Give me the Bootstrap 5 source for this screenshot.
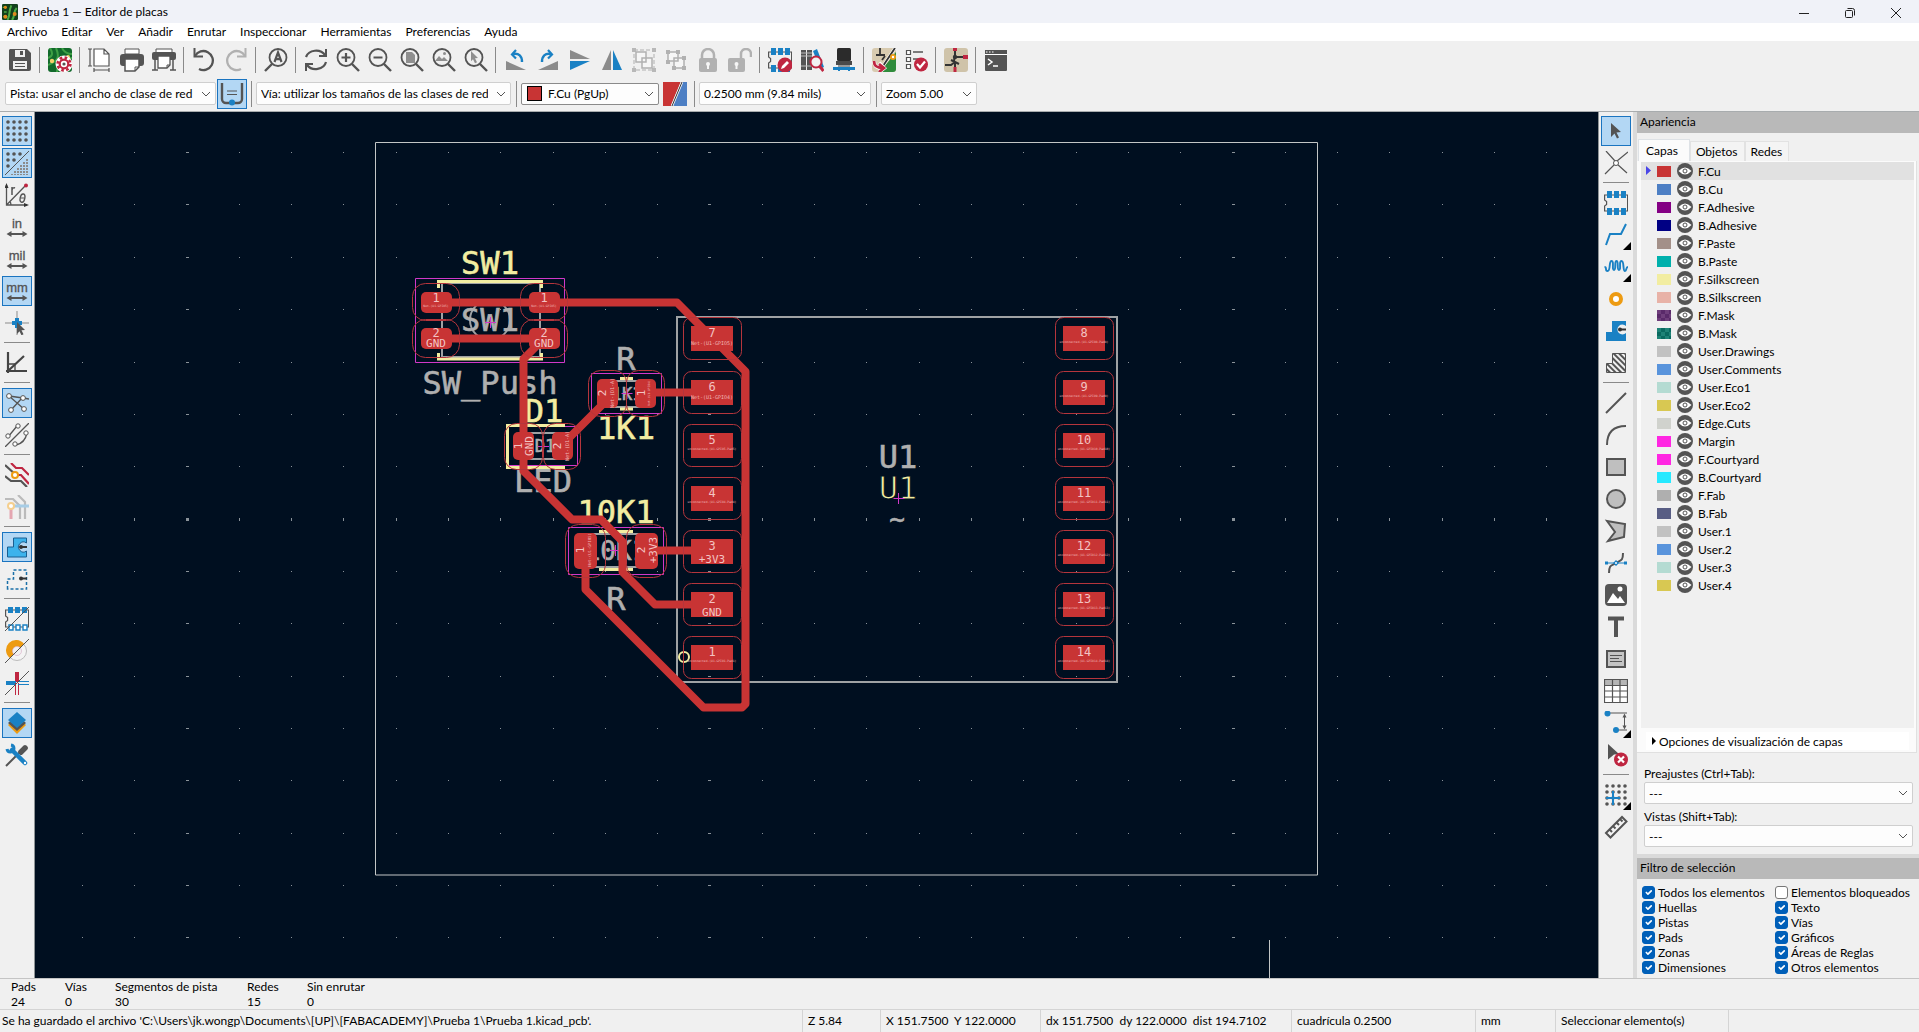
<!DOCTYPE html>
<html lang="es">
<head>
<meta charset="utf-8">
<meta name="viewport" content="width=device-width, initial-scale=1">
<title>Prueba 1 — Editor de placas</title>
<link href="https://cdn.jsdelivr.net/npm/bootstrap@5.3.0/dist/css/bootstrap.min.css" rel="stylesheet">
<style>
:root{--ui:#f0f0f0;--ink:#545454;--sel:#b3d7f4;--selb:#1a74c0;--cu:#c83434}
body{font-family:Lato,"Open Sans",sans-serif;font-size:12px;line-height:15px;color:#000;background:var(--ui);overflow:hidden}
.sprites{width:0;height:0}
.titlebar{height:23px;background:#f0f2f8}
.titlebar .winbtn{width:46px;height:20px;border:0;background:none;padding:0}
.menubar{height:18px;background:#fff}
.menubar a{color:#000;text-decoration:none;padding:0 7px;line-height:18px}
.toolrow{height:38px;padding-left:4px}
.optrow{height:32px;padding:0 5px 3px}
.tool{width:32px;height:32px;padding:3px;border:1px solid transparent;border-radius:0;line-height:0;position:relative}
.tool svg{width:24px;height:24px}
.tool.is-on::before{content:"";position:absolute;inset:0;border:1px solid var(--selb);background:var(--sel)}
.tool.is-on svg{position:relative}
.tool:disabled{border-color:transparent;opacity:.4}
.tool.more::after{content:"";position:absolute;right:0;bottom:0;border:4px solid transparent;border-right-color:#000;border-bottom-color:#000}
.vline{width:8px;height:26px;padding-left:3px;flex:none}
.optrow .form-select + .vline{margin-left:2px}
.vline::before{content:"";display:block;width:1px;height:100%;background:#8a8a8a}
.hline{height:8px;width:26px;padding-top:3px;flex:none}
.hline::before{content:"";display:block;height:1px;background:#8a8a8a}
.pick{font-size:12px;line-height:15px;min-height:0;height:23px;padding:0 22px 0 4px;border:1px solid #cfcfcf;border-radius:2px;background-color:#fdfdfd;color:#000;background-size:10px;background-position:right 4px center;background-image:url("data:image/svg+xml,%3Csvg xmlns='http://www.w3.org/2000/svg' viewBox='0 0 10 10'%3E%3Cpath d='M1 3l4 4 4-4' fill='none' stroke='%23555'/%3E%3C/svg%3E")}
.w-track{width:211px}.w-via{width:255px}.w-grid{width:172px}.w-zoom{width:96px}
.layerpick{width:138px;height:22px;border:1px solid #8a8a8a;border-radius:2px;background:#fdfdfd;padding-left:5px}
.layerpick .pick{border:0;height:20px;background-color:transparent;padding-left:6px}
.chip{width:15px;height:15px;background:var(--cu);border:1px solid #000;flex:none}
.workarea{border-top:1px solid #a8acae;border-bottom:1px solid #c4c4c4}
.sidebar{width:34px;padding-top:3px;flex:none}
.board{background:#000f20;border-left:1px solid #8e9496;border-right:1px solid #8e9496;min-width:0}
.board svg{width:100%;height:100%;display:block}
.board text{font-family:"DejaVu Sans Mono",monospace;text-anchor:middle}
.big{font-size:32px}.mid{font-size:26px}.sml{font-size:17px}
.heavy{stroke-width:.6px}
.pn{font-size:12px;fill:#f3c3c3}.pl{font-size:11px;fill:#f3c3c3}.n5{font-size:5px;fill:#f0b6b6}.n4{font-size:4px;fill:#f0b6b6}.n3{font-size:3px;fill:#f0b6b6}
.panelcol{width:286px;border-left:4px solid #dadada;flex:none}
.caphead{height:21px;background:#b9b9b9;padding-left:3px;line-height:19px}
.caphead.split{height:25px;border-top:4px solid #dadada}
.tabsrow{height:28px;padding-left:1px;border:0}
.tabsrow .nav-link{border:1px solid #e2e2e2;border-bottom:0;border-radius:0;background:#f4f4f4;color:#000;padding:0 6px 0 5px;height:20px;line-height:19px;margin:0}
.tabsrow .nav-link.active{background:#fbfbfb;height:22px;padding:0 11px 0 7px;line-height:20px;color:#000}
.tabpage{background:#fbfbfb;border-right:1px solid #e0e0e0;border-bottom:1px solid #e0e0e0;padding:1px 2px 2px 4px;margin-right:2px}
.layers{background:var(--ui);min-height:0}
.lrow{height:18px;padding-left:5px}
.lrow.current{background:#e1e1e1}
.lrow .arrow{width:11px;height:10px}
.lrow .arrow svg{display:block;width:5px;height:9px}
.sw{width:14px;height:11px;margin-right:6px;flex:none}
.eye{width:16px;height:16px;padding:0;border:0;background:none;margin-right:5px;line-height:0}
.eye svg{width:16px;height:16px}
.fold{background:#fff;height:18px;margin:4px 5px 0;border:0;padding:0 0 0 6px;line-height:15px}
.fold svg{width:4px;height:8px;margin-right:3px}
.field{padding:5px 6px 0 7px}
.field.first{padding-top:13px}
.field.last{padding-bottom:7px}
.field label{display:block;line-height:15px;padding-bottom:1px}
.field .pick{height:22px}
.filters{height:99px;padding:6px 5px}
.filters .col-a{width:133px}
.cbx{height:15px;min-height:0;margin:0;padding:0;display:flex;align-items:center;white-space:nowrap}
.cbx .form-check-input{width:13px;height:13px;margin:0 3px 0 0;float:none;border:1px solid #777;border-radius:3px;flex:none}
.cbx .form-check-input:checked{background-color:#005fb8;border-color:#005fb8}
.info{height:30px;padding-left:11px}
.i1{width:54px}.i2{width:50px}.i3{width:132px}.i4{width:60px}
.statusbar{height:23px;border-top:1px solid #d4d4d4}
.statusbar div{padding-left:5px;line-height:22px;border-left:1px solid #d4d4d4;white-space:nowrap;height:22px}
.statusbar div:first-child{padding-left:2px;border:0}
.s1{width:78px}.s2{width:160px}.s3{width:251px}.s4{width:184px}.s5{width:80px}.s6{width:173px}.s7{width:191px}
</style>
</head>
<body class="vh-100 d-flex flex-column">

<svg class="sprites position-absolute" aria-hidden="true">
<defs>
<pattern id="hatch" width="4" height="4" patternUnits="userSpaceOnUse" patternTransform="rotate(-45)"><rect width="2" height="4" fill="#545454"/></pattern>
</defs>
<symbol id="save" viewBox="0 0 24 24"><path fill="#545454" d="M2 1h17l4 4v16a2 2 0 0 1-2 2H3a2 2 0 0 1-2-2V2z"/><path fill="#f0f0f0" d="M7 2h10v7H7zM5 13h14v8H5z"/><path fill="#545454" d="M12 3h3v4h-3zM7 15h10v1H7zM7 18h10v1H7z"/></symbol>
<symbol id="pcb" viewBox="0 0 24 24"><rect width="24" height="24" rx="3" fill="#12692b"/><path d="M2 0c3 5 3 8-2 10M8 0c4 9 2 13-8 17M14 0c2 4 5 6 10 6M9 24c0-8 3-14 15-14" fill="none" stroke="#3ea045" stroke-width="2"/><circle cx="4" cy="13" r="2.200" fill="#f6d06a"/><circle cx="20" cy="9" r="2" fill="#f6d06a"/></symbol>
<symbol id="boardsetup" viewBox="0 0 24 24"><use href="#pcb"/><circle cx="16" cy="16" r="6" fill="none" stroke="#fff" stroke-width="5"/><circle cx="16" cy="16" r="6.400" fill="none" stroke="#bf2641" stroke-width="2.600" stroke-dasharray="2.600 2.400"/><circle cx="16" cy="16" r="4.300" fill="#fff" stroke="#bf2641" stroke-width="2.200"/><circle cx="16" cy="16" r="1.600" fill="#545454"/></symbol>
<symbol id="page" viewBox="0 0 24 24"><path d="M6 1h10l5 5v12H6z" fill="#fff"/><path d="M6 1h10l5 5v12H6zM16 1v5h5M2 1v17M0 1h4M0 18h4M6 22h15M6 20v4M21 20v4" fill="none" stroke="#545454" stroke-width="1.200"/></symbol>
<symbol id="print" viewBox="0 0 24 24"><path d="M5 1h14v5H5z" fill="#fff" stroke="#545454"/><rect y="6" width="24" height="12" rx="3" fill="#545454"/><path d="M5 11h14v8l-4 4H5z" fill="#fff" stroke="#545454" stroke-width="1.500"/><path d="M19 19h-4v4" fill="none" stroke="#545454"/></symbol>
<symbol id="plot" viewBox="0 0 24 24"><path d="M4 1h16v4H4z" fill="#fff" stroke="#545454"/><rect y="4" width="24" height="8" rx="2" fill="#545454"/><path d="M6 8h12v9l-3 3H6z" fill="#fff" stroke="#545454" stroke-width="1.300"/><path d="M3 11v11M21 11v11M0 22h6M18 22h6" stroke="#545454" stroke-width="1.500" fill="none"/><path d="M18 17h-3v3" fill="none" stroke="#545454"/></symbol>
<symbol id="undo" viewBox="0 0 24 24"><path d="M3 8a9.500 9.500 0 1 1 4 13" fill="none" stroke="#545454" stroke-width="2.300"/><path d="M2.500 0v8.500h8.500" fill="none" stroke="#545454" stroke-width="2"/></symbol>
<symbol id="redo" viewBox="0 0 24 24"><use href="#undo" transform="matrix(-1 0 0 1 24 0)"/></symbol>
<symbol id="lens" viewBox="0 0 24 24"><circle cx="10" cy="9.500" r="8.500" fill="none" stroke="#545454" stroke-width="1.800"/><path d="M16 16l7 7" stroke="#545454" stroke-width="2.400"/></symbol>
<symbol id="find" viewBox="0 0 24 24"><use href="#lens" transform="matrix(-1 0 0 1 24 0)"/><path d="M10.500 14l3.500-9.500 3.500 9.500M11.500 11.200h5" fill="none" stroke="#545454" stroke-width="2.200"/></symbol>
<symbol id="refresh" viewBox="0 0 24 24"><path d="M2 9A10.500 9 0 0 1 21 7M22 14A10.500 9 0 0 1 3 17" fill="none" stroke="#545454" stroke-width="2.200"/><path d="M22 1v7h-7M2 23v-7h7" fill="none" stroke="#545454" stroke-width="2"/></symbol>
<symbol id="zin" viewBox="0 0 24 24"><use href="#lens"/><path d="M10 5v9M5.500 9.500h9" stroke="#545454" stroke-width="2.200"/></symbol>
<symbol id="zout" viewBox="0 0 24 24"><use href="#lens"/><path d="M5.500 9.500h9" stroke="#545454" stroke-width="2"/></symbol>
<symbol id="zfit" viewBox="0 0 24 24"><use href="#lens"/><path d="M6 4h6l3 3v8H6z" fill="#8f8f8f"/></symbol>
<symbol id="zobj" viewBox="0 0 24 24"><use href="#lens"/><path d="M3 13l4-5 3 3 2-2 4 4z" fill="#8f8f8f"/><circle cx="12.500" cy="5.500" r="1.500" fill="#8f8f8f"/></symbol>
<symbol id="zsel" viewBox="0 0 24 24"><use href="#lens"/><path d="M7 3l7 7-3 .3 2 4-2 1-2-4-2 2z" fill="#8f8f8f"/></symbol>
<symbol id="rotl" viewBox="0 0 24 24"><path d="M2 13v9h20z" fill="#8b8b8b"/><path d="M9 6c6-1 9 2 9 8" fill="none" stroke="#1a81c4" stroke-width="2.400"/><path d="M12 2L8 6.500l4 4" fill="none" stroke="#1a81c4" stroke-width="2.200"/></symbol>
<symbol id="rotr" viewBox="0 0 24 24"><use href="#rotl" transform="matrix(-1 0 0 1 24 0)"/></symbol>
<symbol id="flipv" viewBox="0 0 24 24"><path d="M2 2v9h20z" fill="#8b8b8b"/><path d="M2 22v-9h20z" fill="#1a81c4"/></symbol>
<symbol id="fliph" viewBox="0 0 24 24"><path d="M2 22h9V2z" fill="#8b8b8b"/><path d="M22 22h-9V2z" fill="#1a81c4"/></symbol>
<symbol id="grp" viewBox="0 0 24 24"><path d="M2 2h20v20H2z" fill="none" stroke="#545454" stroke-dasharray="4 2"/><path d="M0 0h4v4H0zM20 0h4v4h-4zM0 20h4v4H0zM20 20h4v4h-4z" fill="#666"/><path d="M4 4h10v10H4zM10 10h10v10H10z" fill="#fff" stroke="#545454" stroke-width="1.500"/></symbol>
<symbol id="ungrp" viewBox="0 0 24 24"><path d="M4 4h10v9H4zM10 10h10v10H10z" fill="#fff" stroke="#545454" stroke-width="1.500"/><path d="M2 2h4v4H2zM12 2h4v4h-4zM2 12h4v4H2zM18 8h4v4h-4zM8 18h4v4H8zM18 18h4v4h-4z" fill="#545454"/></symbol>
<symbol id="lock" viewBox="0 0 24 24"><path d="M6 11V7a6 6 0 0 1 12 0v4" fill="none" stroke="#545454" stroke-width="2.500"/><rect x="3" y="10" width="18" height="14" rx="2" fill="#545454"/><circle cx="12" cy="16" r="2" fill="#fff"/><path d="M11 16h2v5h-2z" fill="#fff"/></symbol>
<symbol id="unlock" viewBox="0 0 24 24"><path d="M13 11V6a5 5 0 0 1 10 0v3" fill="none" stroke="#545454" stroke-width="2.500"/><rect x="0" y="10" width="17" height="14" rx="2" fill="#545454"/><circle cx="8.500" cy="16" r="2" fill="#fff"/><path d="M7.500 16h2v5h-2z" fill="#fff"/></symbol>
<symbol id="fp" viewBox="0 0 24 24"><path d="M.6 4h23v16H.6v-5l2-1.500v-3L.6 9z" fill="none" stroke="#545454" stroke-width="1.200"/><path d="M3 0h5v7H3zM10 0h5v7h-5zM17 0h5v7h-5zM3 17h5v7H3zM10 17h5v7h-5zM17 17h5v7h-5z" fill="#1a81c4"/></symbol>
<symbol id="fpedit" viewBox="0 0 24 24"><use href="#fp"/><circle cx="17" cy="17" r="7.500" fill="#bf2641"/><path d="M13 21l1-3 5-5 2 2-5 5z" fill="#fff"/></symbol>
<symbol id="lib" viewBox="0 0 24 24"><path d="M1 2h5v20H1zM7 2h5v20H7z" fill="#545454"/><path d="M1 5h11M1 8h11M1 18h11" stroke="#bbb"/><path d="M13 3l4-2 7 18-4 2z" fill="#1a81c4"/><circle cx="16" cy="14" r="5.500" fill="#f2f2f2" stroke="#bf2641" stroke-width="2"/><path d="M19.500 18l4 5" stroke="#bf2641" stroke-width="3"/></symbol>
<symbol id="fpview" viewBox="0 0 24 24"><rect x="5" width="14" height="13" rx="1.500" fill="#2b2b2b"/><path d="M4 13h16v4H4z" fill="#4a4a4a"/><path d="M6 17h12v2H6z" fill="#999"/><path d="M1 19h22v3H1z" fill="#1a81c4"/><path d="M7 19v4M17 19v4" stroke="#1a81c4" stroke-width="2"/></symbol>
<symbol id="upd" viewBox="0 0 24 24"><rect width="24" height="24" rx="3" fill="#d8cbb0"/><path d="M24 4v17a3 3 0 0 1-3 3H8z" fill="#2f8c3c"/><path d="M23 0L7 24" stroke="#fff" stroke-width="3"/><path d="M23 0L7 24M8 0v7M4 7h9M10 12l3-4" stroke="#333" stroke-width="1.800" fill="none"/><circle cx="21" cy="9" r="3" fill="#ed9b12"/><circle cx="21" cy="9" r="1.200" fill="#fff"/><path d="M2 13c0 6 4 7 9 7M7 15l5 5-5 4" stroke="#fff" stroke-width="4" fill="none"/><path d="M2 13c0 6 4 7 9 7M7 16l5 4-5 4" stroke="#bf2641" stroke-width="2.800" fill="none"/></symbol>
<symbol id="drc" viewBox="0 0 24 24"><path d="M2.500 2.500h4v4h-4zM2.500 9.500h4v4h-4zM2.500 16.500h4v4h-4z" fill="#fff" stroke="#545454" stroke-width="1.200"/><path d="M9 4h10M9 11h5" stroke="#545454" stroke-width="1.500"/><circle cx="17" cy="16.500" r="7" fill="#bf2641"/><path d="M13 16l3 3.500 5-6" fill="none" stroke="#fff" stroke-width="2.200"/></symbol>
<symbol id="sch" viewBox="0 0 24 24"><rect width="24" height="24" rx="3" fill="#cfc3a9"/><path d="M11 3v5l-1 5M10 9h9M11 14l-4 3H1M11 14v10M7 12l8 4" stroke="#333" stroke-width="2" fill="none"/><circle cx="11" cy="9" r="2.200" fill="#333"/><path d="M11 0v3M19 9h5" stroke="#bf2641" stroke-width="4"/><path d="M11 19v5" stroke="#bf2641" stroke-width="3"/></symbol>
<symbol id="term" viewBox="0 0 24 24"><path d="M1 2h22v4H1zM1 7h22v15a1 1 0 0 1-1 1H2a1 1 0 0 1-1-1z" fill="#545454"/><path d="M1 6.500h22M2 4h1.500M5 4h1.500M8 4h1.500" stroke="#fff"/><path d="M4 11l4 3-4 3M9 18h5" stroke="#fff" stroke-width="1.500" fill="none"/></symbol>
<symbol id="autow" viewBox="0 0 24 24"><path d="M2 1v16a4 4 0 0 0 4 4h12a4 4 0 0 0 4-4V1" fill="none" stroke="#545454" stroke-width="2.400"/><path d="M7 9h10M7 12.500h10" stroke="#545454" stroke-width="1.200"/><circle cx="12" cy="20.500" r="3" fill="#1a81c4"/></symbol>
<symbol id="pair" viewBox="0 0 24 24"><path d="M0 0h18L8 24H0z" fill="#c83434"/><path d="M18 0h6v24H8z" fill="#4d7fc4"/><path d="M19 0L9 24" stroke="#fff" stroke-width="2.500"/><path d="M19 0L9 24" stroke="#333"/></symbol>
<symbol id="grid" viewBox="0 0 24 24"><path d="M3 3h19M3 9h19M3 15h19M3 21h19" stroke="#545454" stroke-width="3.600" stroke-linecap="round" stroke-dasharray="0 6"/></symbol>
<symbol id="gridov" viewBox="0 0 24 24"><path d="M3 3h13M3 9h7M3 15h1" stroke="#545454" stroke-width="3.600" stroke-linecap="round" stroke-dasharray="0 6"/><path d="M21 9h3M18 12h6M15 15h9M12 18h12M9 21h15M6 24h18" stroke="#8b8b8b" stroke-width="2" stroke-dasharray="2 1"/><path d="M0 24L24 0" stroke="#545454"/></symbol>
<symbol id="polar" viewBox="0 0 24 24"><path d="M1.500 2v20H22M1.500 22L21 2M6 22c0-2-.5-3-1.500-4" fill="none" stroke="#545454" stroke-width="1.300"/><path d="M1.500 0L-.5 5h4zM24 22l-5-2v4z" fill="#333"/><circle cx="21" cy="2.500" r="2" fill="#bf2641"/><path d="M7 12V4M7 7q1-3 3-2" fill="none" stroke="#545454" stroke-width="1.500"/><ellipse cx="17.500" cy="15" rx="2.300" ry="4.200" fill="none" stroke="#545454" stroke-width="1.400" transform="rotate(12 17 15)"/><path d="M15.500 15h4" stroke="#545454"/></symbol>
<symbol id="unit" viewBox="0 0 24 24"><path d="M4 19h16" stroke="#545454" stroke-width="2"/><path d="M1.500 19l5-3v6zM22.500 19l-5-3v6z" fill="#545454"/></symbol>
<symbol id="cross" viewBox="0 0 24 24"><path d="M0 12h24M12 0v24" stroke="#8b8b8b"/><path d="M12 7v10M7 12h10" stroke="#1a81c4" stroke-width="4"/><path d="M12 11l8 8-3.500.3 2 4-2 1-2-4L12 23z" fill="#545454"/></symbol>
<symbol id="angle" viewBox="0 0 24 24"><path d="M3 1v21M1 20h21M3 20L19 5" stroke="#444" stroke-width="2.200" fill="none"/><path d="M3 13h7v7" stroke="#444" stroke-width="1.300" fill="none"/></symbol>
<symbol id="rats" viewBox="0 0 24 24"><path d="M4 5l15 13M18 6L6 19M4 5l14 2 6 1" stroke="#545454" stroke-width="1.300"/><g fill="#fff" stroke="#545454"><circle cx="4" cy="5" r="2.400"/><circle cx="18" cy="7" r="2.400"/><circle cx="6" cy="19" r="2.400"/><circle cx="19" cy="18" r="2.400"/></g></symbol>
<symbol id="ratc" viewBox="0 0 24 24"><path d="M3 14L12 3M11 22q9-2 11-12M0 24L24 0" stroke="#545454" stroke-width="1.300" fill="none"/><g fill="#fff" stroke="#545454"><circle cx="3" cy="13" r="2.200"/><circle cx="13" cy="3" r="2.200"/><circle cx="10" cy="21" r="2.200"/><circle cx="21" cy="10" r="2.200"/></g></symbol>
<symbol id="nethl" viewBox="0 0 24 24"><path d="M0 2l11 10M0 13l6 5h10l6 6" stroke="#545454" stroke-width="2.200" fill="none"/><path d="M6 0l5 5h6l7 7M11 12h5l8 9" stroke="#bf2641" stroke-width="2.200" fill="none"/><circle cx="10" cy="12" r="3" fill="#fff" stroke="#ed9b12" stroke-width="2"/></symbol>
<symbol id="netdim" viewBox="0 0 24 24"><path d="M0 4h8l7 7v13M13 0l7 7v17" stroke="#bbb" stroke-width="2.200" fill="none"/><path d="M6 11h18" stroke="#a7cde6" stroke-width="3"/><path d="M6 12v12" stroke="#e4a6b1" stroke-width="3"/><circle cx="6" cy="11" r="3" fill="#fff" stroke="#f5cf8e" stroke-width="2"/></symbol>
<symbol id="zfill" viewBox="0 0 24 24"><path d="M2.500 22V12h6V3h13v5a5 5 0 1 0 0 8v6z" fill="#3db3ec" stroke="#1a5f91"/><circle cx="16" cy="12" r="2" fill="#333"/><path d="M16 12h6" stroke="#333" stroke-width="2"/></symbol>
<symbol id="zline" viewBox="0 0 24 24"><path d="M2.500 22V12h6V3h13v19z" fill="none" stroke="#1a6fa8" stroke-width="1.500" stroke-dasharray="3 2"/><circle cx="16" cy="11.500" r="2" fill="#333"/><path d="M16 11.500h6" stroke="#333" stroke-width="2"/></symbol>
<symbol id="fpline" viewBox="0 0 24 24"><path d="M.6 3h23v17H.6v-5l2-1.500v-3L.6 9z" fill="none" stroke="#545454" stroke-width="1.200"/><path d="M3 0h5v6H3zM10 0h5v6h-5zM17 0h5v6h-5z" fill="#1a81c4"/><path d="M4 18h4v5H4zM11 18h4v5h-4zM18 18h4v5h-4z" fill="#fff" stroke="#1a81c4" stroke-width="1.400"/><path d="M0 24L24 0" stroke="#545454"/></symbol>
<symbol id="vialine" viewBox="0 0 24 24"><circle cx="12" cy="12" r="9.500" fill="#f4f4f4" stroke="#bbb"/><path d="M5 19A10 10 0 1 1 19 5l-4 4a4 4 0 1 0-6 6z" fill="#ed9b12"/><circle cx="12" cy="12" r="4.500" fill="#f2f2f2" stroke="#d5a8c4" stroke-width=".6"/><path d="M0 24L24 0" stroke="#545454"/></symbol>
<symbol id="trline" viewBox="0 0 24 24"><path d="M12 1v10" stroke="#bf2641" stroke-width="4"/><path d="M1 12h10" stroke="#1a81c4" stroke-width="4"/><path d="M10.500 12v12M13.500 12v12" stroke="#bf2641"/><path d="M13 10.500h11M13 13.500h11" stroke="#1a81c4"/><path d="M0 24L24 0" stroke="#545454"/></symbol>
<symbol id="stack" viewBox="0 0 24 24"><path d="M12 6l9 8-9 9-9-9z" fill="#ed9b12"/><path d="M12 4l9 8-9 8-9-8z" fill="#545454"/><path d="M12 1l9 8-9 8-9-8z" fill="#1a81c4"/></symbol>
<symbol id="tools" viewBox="0 0 24 24"><path d="M1 23L14 10" stroke="#545454" stroke-width="2"/><path d="M15 9l5-5 1 1-5 5z" stroke="#545454" stroke-width="4" fill="#545454" stroke-linejoin="round"/><path d="M7 7l13 13" stroke="#1a81c4" stroke-width="4.500" stroke-linecap="round"/><path d="M6 2a3.500 3.500 0 1 1-4 4" fill="none" stroke="#1a81c4" stroke-width="3"/><circle cx="20" cy="20" r="1.200" fill="#fff"/></symbol>
<symbol id="cursor" viewBox="0 0 24 24"><path d="M7 4l10 9-4.500.5 2.500 5-2 1-2.500-5L7 18z" fill="#545454"/></symbol>
<symbol id="localr" viewBox="0 0 24 24"><path d="M2 0l9 10M24 1l-11 9M1 23l10-10M23 22L13 13" stroke="#545454" stroke-width="1.200"/><circle cx="12" cy="12" r="2.500" fill="#fff" stroke="#545454"/></symbol>
<symbol id="track" viewBox="0 0 24 24"><path d="M2 22L6 11h11l5-10" fill="none" stroke="#1a81c4" stroke-width="2"/></symbol>
<symbol id="tune" viewBox="0 0 24 24"><path d="M.5 12c3 0 0 4 3 4 3.500 0 1-10 4-10s0 9 2.500 9 0-9 2.500-9 0 9 2.500 9-.5-9 2.500-9 1 10 3.500 10c2 0 .5-4 3-4" fill="none" stroke="#1a81c4" stroke-width="1.900"/></symbol>
<symbol id="via" viewBox="0 0 24 24"><circle cx="12" cy="12" r="5" fill="#fff" stroke="#ed9b12" stroke-width="4"/></symbol>
<symbol id="zone" viewBox="0 0 24 24"><path d="M2 22V13h6V2h14v5a5 5 0 1 0 0 7v8z" fill="#1a81c4"/><circle cx="16" cy="10.500" r="2" fill="#333"/><path d="M16 10.500h6" stroke="#333" stroke-width="2"/></symbol>
<symbol id="keep" viewBox="0 0 24 24"><path d="M2.500 21.500v-9h6v-10h13v19z" fill="url(#hatch)" stroke="#545454"/></symbol>
<symbol id="lin" viewBox="0 0 24 24"><path d="M2 22L22 2" stroke="#545454" stroke-width="2"/></symbol>
<symbol id="arc" viewBox="0 0 24 24"><path d="M3 22C3 9 10 3 22 3" stroke="#545454" stroke-width="2" fill="none"/></symbol>
<symbol id="rct" viewBox="0 0 24 24"><path d="M3 4h18v16H3z" stroke="#545454" stroke-width="2" fill="#bfbfbf"/></symbol>
<symbol id="cir" viewBox="0 0 24 24"><circle cx="12" cy="12" r="9" stroke="#545454" stroke-width="2" fill="#bfbfbf"/></symbol>
<symbol id="poly" viewBox="0 0 24 24"><path d="M3 2l18 3-1 13-16 4 7-9z" stroke="#545454" stroke-width="2" fill="#bfbfbf"/></symbol>
<symbol id="bez" viewBox="0 0 24 24"><path d="M5 22c0-9 3-7 7-10s7-1 7-10" stroke="#545454" stroke-width="2" fill="none"/><path d="M2 12h20" stroke="#1a81c4"/><path d="M1 10.500h3v3H1zM20 10.500h3v3h-3zM12 9l3 3-3 3-3-3z" fill="#1a81c4"/><circle cx="12" cy="12" r="1" fill="#fff"/></symbol>
<symbol id="img" viewBox="0 0 24 24"><rect x="1" y="1" width="22" height="22" rx="4" fill="#545454"/><path d="M3 20l6-10 5 6 2-3 5 7z" fill="#fff"/><circle cx="16" cy="6" r="2.500" fill="#fff"/></symbol>
<symbol id="tee" viewBox="0 0 24 24"><path d="M4 3.500h16M12 3v19" stroke="#545454" stroke-width="4" fill="none"/></symbol>
<symbol id="tbox" viewBox="0 0 24 24"><path d="M3 4h18v16H3z" stroke="#545454" stroke-width="2" fill="#c4c4c4"/><path d="M6 8.500h12M6 11.500h9M6 14.500h12" stroke="#545454"/></symbol>
<symbol id="tbl" viewBox="0 0 24 24"><path d="M.5.5h23v23H.5z" fill="#fff"/><path d="M.5.5h23v6H.5z" fill="#b5b5b5"/><path d="M.5.5h23v23H.5zM.5 6.500h23M.5 12h23M.5 18h23M8.500.5v23M16 .5v23" fill="none" stroke="#545454" stroke-width="1.200"/></symbol>
<symbol id="dim" viewBox="0 0 24 24"><path d="M4 2h19M12 19h11M20.500 4v13" stroke="#545454"/><path d="M20.500 2.500l-2 4h4zM20.500 18.500l-2-4h4z" fill="#545454"/><circle cx="3.500" cy="2.500" r="3" fill="#1a81c4"/><circle cx="12" cy="19" r="3" fill="#1a81c4"/></symbol>
<symbol id="del" viewBox="0 0 24 24"><path d="M4 1l11 10-5 .5-6 5z" fill="#545454"/><circle cx="17" cy="16.500" r="7" fill="#bf2641"/><path d="M14 13.500l6 6M20 13.500l-6 6" stroke="#fff" stroke-width="2.200"/></symbol>
<symbol id="gorg" viewBox="0 0 24 24"><use href="#grid"/><path d="M9 8v14M2 15h14" stroke="#1a81c4" stroke-width="2"/></symbol>
<symbol id="ruler" viewBox="0 0 24 24"><path d="M2 18L18 2l4.500 4.500L6.500 22.500zM6 15l2 2M9.500 11.500l2 2M13 8l2 2M16.500 4.500l2 2" fill="#f4f4f4" stroke="#545454" stroke-width="2"/></symbol>
<symbol id="eye" viewBox="0 0 16 16"><circle cx="8" cy="8" r="8" fill="#545454"/><path d="M1.500 8q6.500-7 13 0-6.500 7-13 0z" fill="#fff"/><circle cx="8" cy="8" r="2" fill="#fff" stroke="#545454" stroke-width="1"/></symbol>
</svg>

<header>
  <div class="titlebar d-flex align-items-center">
    <svg class="mx-1" style="margin-left:2px!important" width="16" height="16" viewBox="0 0 24 24"><rect width="24" height="24" rx="2" fill="#12401d"/><path d="M8 24c5-6 1-12 6-22M15 24c5-6 1-12 7-18" fill="none" stroke="#4dac46" stroke-width="3"/><path d="M1 5h6M3 12h4M2 19h6" stroke="#4dac46" stroke-width="2"/><circle cx="5" cy="5" r="2.500" fill="#e08a1e"/><circle cx="5" cy="19" r="3" fill="#e08a1e"/><circle cx="19" cy="15" r="3" fill="#e08a1e"/></svg>
    <span class="flex-grow-1">Prueba 1 — Editor de placas</span>
    <button class="winbtn" aria-label="Minimizar"><svg width="10" height="10"><path d="M0 5.500h10" stroke="#222"/></svg></button>
    <button class="winbtn" aria-label="Restaurar"><svg width="10" height="10" fill="none" stroke="#222"><rect x=".5" y="2.500" width="7" height="7" rx="1"/><path d="M2.500 .5h5a2 2 0 0 1 2 2v5"/></svg></button>
    <button class="winbtn" aria-label="Cerrar"><svg width="10" height="10"><path d="M0 0l10 10M10 0L0 10" stroke="#222"/></svg></button>
  </div>
  <nav class="menubar d-flex">
    <a href="#">Archivo</a><a href="#">Editar</a><a href="#">Ver</a><a href="#">Añadir</a><a href="#">Enrutar</a><a href="#">Inspeccionar</a><a href="#">Herramientas</a><a href="#">Preferencias</a><a href="#">Ayuda</a>
  </nav>
  <div class="toolrow d-flex align-items-center" role="toolbar" aria-label="Principal">
    <button class="btn tool" title="Guardar"><svg><use href="#save"/></svg></button><span class="vline"></span>
    <button class="btn tool" title="Configurar placa"><svg><use href="#boardsetup"/></svg></button><span class="vline"></span>
    <button class="btn tool" title="Página"><svg><use href="#page"/></svg></button>
    <button class="btn tool" title="Imprimir"><svg><use href="#print"/></svg></button>
    <button class="btn tool" title="Trazar"><svg><use href="#plot"/></svg></button><span class="vline"></span>
    <button class="btn tool" title="Deshacer"><svg><use href="#undo"/></svg></button>
    <button class="btn tool" title="Rehacer" disabled><svg><use href="#redo"/></svg></button><span class="vline"></span>
    <button class="btn tool" title="Buscar"><svg><use href="#find"/></svg></button><span class="vline"></span>
    <button class="btn tool" title="Refrescar"><svg><use href="#refresh"/></svg></button>
    <button class="btn tool" title="Acercar"><svg><use href="#zin"/></svg></button>
    <button class="btn tool" title="Alejar"><svg><use href="#zout"/></svg></button>
    <button class="btn tool" title="Ajustar a página"><svg><use href="#zfit"/></svg></button>
    <button class="btn tool" title="Ajustar a objetos"><svg><use href="#zobj"/></svg></button>
    <button class="btn tool" title="Ajustar a selección"><svg><use href="#zsel"/></svg></button><span class="vline"></span>
    <button class="btn tool" title="Rotar a la izquierda"><svg><use href="#rotl"/></svg></button>
    <button class="btn tool" title="Rotar a la derecha"><svg><use href="#rotr"/></svg></button>
    <button class="btn tool" title="Reflejar vertical"><svg><use href="#flipv"/></svg></button>
    <button class="btn tool" title="Reflejar horizontal"><svg><use href="#fliph"/></svg></button>
    <button class="btn tool" title="Agrupar" disabled><svg><use href="#grp"/></svg></button>
    <button class="btn tool" title="Desagrupar" disabled><svg><use href="#ungrp"/></svg></button>
    <button class="btn tool" title="Bloquear" disabled><svg><use href="#lock"/></svg></button>
    <button class="btn tool" title="Desbloquear" disabled><svg><use href="#unlock"/></svg></button><span class="vline"></span>
    <button class="btn tool" title="Editor de huellas"><svg><use href="#fpedit"/></svg></button>
    <button class="btn tool" title="Bibliotecas"><svg><use href="#lib"/></svg></button>
    <button class="btn tool" title="Visor 3D"><svg><use href="#fpview"/></svg></button><span class="vline"></span>
    <button class="btn tool" title="Actualizar placa"><svg><use href="#upd"/></svg></button>
    <button class="btn tool" title="Comprobar reglas"><svg><use href="#drc"/></svg></button><span class="vline"></span>
    <button class="btn tool" title="Esquema"><svg><use href="#sch"/></svg></button><span class="vline"></span>
    <button class="btn tool" title="Consola"><svg><use href="#term"/></svg></button>
  </div>
  <div class="optrow d-flex align-items-center">
    <select class="form-select pick w-track" aria-label="Pista"><option>Pista: usar el ancho de clase de red</option></select>
    <button class="btn tool is-on" title="Ancho automático"><svg><use href="#autow"/></svg></button><span class="vline"></span>
    <select class="form-select pick w-via" aria-label="Vía"><option>Vía: utilizar los tamaños de las clases de red</option></select><span class="vline"></span>
    <div class="layerpick d-flex align-items-center"><span class="chip"></span><select class="form-select pick" aria-label="Capa"><option>F.Cu (PgUp)</option></select></div>
    <button class="btn tool" title="Par de capas"><svg><use href="#pair"/></svg></button><span class="vline"></span>
    <select class="form-select pick w-grid" aria-label="Cuadrícula"><option>0.2500 mm (9.84 mils)</option></select><span class="vline"></span>
    <select class="form-select pick w-zoom" aria-label="Zoom"><option>Zoom 5.00</option></select>
  </div>
</header>

<main class="workarea d-flex flex-grow-1 overflow-hidden">
  <div class="sidebar d-flex flex-column align-items-center" role="toolbar" aria-label="Opciones">
    <button class="btn tool is-on" title="Cuadrícula"><svg><use href="#grid"/></svg></button>
    <button class="btn tool is-on" title="Cuadrículas alternativas"><svg><use href="#gridov"/></svg></button>
    <button class="btn tool" title="Coordenadas polares"><svg><use href="#polar"/></svg></button>
    <button class="btn tool" title="Pulgadas"><svg viewBox="0 0 24 24"><use href="#unit"/><text x="12" y="13" text-anchor="middle" font-family="Liberation Sans, sans-serif" font-size="13" fill="#545454" stroke="#545454" stroke-width=".3">in</text></svg></button>
    <button class="btn tool" title="Milésimas"><svg viewBox="0 0 24 24"><use href="#unit"/><text x="12" y="13" text-anchor="middle" font-family="Liberation Sans, sans-serif" font-size="13" fill="#545454" stroke="#545454" stroke-width=".3">mil</text></svg></button>
    <button class="btn tool is-on" title="Milímetros"><svg viewBox="0 0 24 24"><use href="#unit"/><text x="12" y="13" text-anchor="middle" font-family="Liberation Sans, sans-serif" font-size="13" fill="#545454" stroke="#545454" stroke-width=".3">mm</text></svg></button>
    <button class="btn tool" title="Cursor"><svg><use href="#cross"/></svg></button><span class="hline"></span>
    <button class="btn tool" title="Ángulos"><svg><use href="#angle"/></svg></button><span class="hline"></span>
    <button class="btn tool is-on" title="Conexiones"><svg><use href="#rats"/></svg></button>
    <button class="btn tool" title="Conexiones curvas"><svg><use href="#ratc"/></svg></button><span class="hline"></span>
    <button class="btn tool" title="Resaltar red"><svg><use href="#nethl"/></svg></button>
    <button class="btn tool" title="Atenuar redes"><svg><use href="#netdim"/></svg></button><span class="hline"></span>
    <button class="btn tool is-on" title="Zonas rellenas"><svg><use href="#zfill"/></svg></button>
    <button class="btn tool" title="Contorno de zonas"><svg><use href="#zline"/></svg></button><span class="hline"></span>
    <button class="btn tool" title="Contorno de pads"><svg><use href="#fpline"/></svg></button>
    <button class="btn tool" title="Contorno de vías"><svg><use href="#vialine"/></svg></button>
    <button class="btn tool" title="Contorno de pistas"><svg><use href="#trline"/></svg></button><span class="hline"></span>
    <button class="btn tool is-on" title="Apariencia"><svg><use href="#stack"/></svg></button>
    <button class="btn tool" title="Propiedades"><svg><use href="#tools"/></svg></button>
  </div>

  <div class="board flex-grow-1">
    <svg viewBox="35 112 1563 866" preserveAspectRatio="xMinYMin slice" role="img" aria-label="Placa">
      <g id="dots" fill="#8a9299" shape-rendering="crispEdges"></g>
      <path d="M375.500 142.500h942v732.500h-942zM1269.500 940v38" fill="none" stroke="#c3c6c6"/>
      <!-- fabrication layer -->
      <g fill="none" stroke="#9fa2a4" stroke-width="2">
        <path d="M677 317h440v365H677z"/>
        <path d="M442 283h98v74h-98zM606 381h40M606 407h40M522 433h40M522 459h40M585 534h60M585 567h60"/>
        <circle cx="490" cy="320" r="20"/>
      </g>
      <g fill="#afafaf" stroke="#afafaf" class="heavy">
        <text class="big" x="490" y="331">SW1</text><text class="big" x="490" y="394">SW_Push</text>
        <text class="big" x="626" y="370">R</text><text class="big" x="543" y="492">LED</text>
        <text class="big" x="616" y="610">R</text><text class="big" x="898" y="468">U1</text>
        <text class="mid" x="897" y="528">~</text>
        <text class="sml" x="627" y="400">1K1</text><text class="sml" x="545" y="452">D1</text><text class="mid" x="616" y="560">10K1</text>
      </g>
      <!-- courtyards -->
      <path d="M415.500 278.500h149v84h-149zM591.500 373.500h70v40h-70zM507.500 426.500h70v39h-70zM568.500 527.500h95v47h-95z" fill="none" stroke="#d138c8"/>
      <!-- silkscreen -->
      <g fill="none" stroke="#f2eda1" stroke-width="3">
        <path d="M438.500 288v-6.500h103v6.500M438.500 353v6h103v-6M620 378.500h13M620 409h13M565 425.500h-57.500v42H565M599 531.500h34M599 569.500h34"/>
        <circle cx="684" cy="657" r="5" stroke-width="2"/>
      </g>
      <g fill="#f2eda1">
        <g stroke="#f2eda1" class="heavy"><text class="big" x="490" y="274">SW1</text><text class="big" x="626" y="439">1K1</text>
        <text class="big" x="544" y="422">D1</text><text class="big" x="616" y="523">10K1</text></g>
        <text class="big" x="898" y="499" stroke="#000f20" stroke-width="1">U1</text>
      </g>
      <!-- footprint anchors -->
      <path d="M893.500 498.500h11M898.500 493v11M621.500 393.500h11M627 388v11M538 446.500h11M543.500 441v11M610 550.500h11M615.500 545v11M485 322.500h11M490.500 317v11" stroke="#d138c8"/>
      <!-- copper -->
      <g fill="none" stroke="#c83434" stroke-width="8" stroke-linejoin="round">
        <path d="M437 302.500H677L745.500 371.500V704L742 707.500H703.500L585.500 589.500V545"/>
        <path d="M437 338.500H544L523.500 359V471L572 519.500H601L622.500 541.500V572L655 604.500H712"/>
        <path d="M647 550.500H712M645 392.500H712M562 445L607 400"/>
      </g>
      <g fill="#c83434">
        <rect x="421" y="292" width="31" height="21" rx="5"/><rect x="529" y="292" width="31" height="21" rx="5"/>
        <rect x="421" y="328" width="31" height="21" rx="5"/><rect x="529" y="328" width="31" height="21" rx="5"/>
        <rect x="597" y="379" width="21" height="29" rx="5"/><rect x="635" y="379" width="21" height="29" rx="5"/>
        <rect x="513" y="432" width="21" height="28" rx="5"/><rect x="552" y="432" width="21" height="28" rx="5"/>
        <rect x="574" y="533" width="23" height="36" rx="5"/><rect x="635" y="533" width="23" height="36" rx="5"/>
      </g>
      <g fill="none" stroke="#b5353c">
        <rect x="412.500" y="283.500" width="47" height="37" rx="13"/><rect x="520.500" y="283.500" width="47" height="37" rx="13"/>
        <rect x="412.500" y="319.500" width="47" height="38" rx="13"/><rect x="520.500" y="319.500" width="47" height="38" rx="13"/>
        <rect x="588.500" y="370.500" width="38" height="46" rx="12"/><rect x="626.500" y="370.500" width="38" height="46" rx="12"/>
        <rect x="504.500" y="423.500" width="38" height="46" rx="12"/><rect x="543.500" y="423.500" width="37" height="46" rx="12"/>
        <rect x="565.500" y="524.500" width="40" height="53" rx="13"/><rect x="626.500" y="524.500" width="40" height="53" rx="13"/>
      </g>
      <text class="pn" x="436" y="302">1</text><text class="n3" x="436" y="307">Net-(U1-GPIO5)</text>
      <text class="pn" x="544" y="302">1</text><text class="n3" x="544" y="307">Net-(U1-GPIO5)</text>
      <text class="pn" x="436" y="337">2</text><text class="pl" x="436" y="347">GND</text>
      <text class="pn" x="544" y="337">2</text><text class="pl" x="544" y="347">GND</text>
      <g id="pads"></g>
      <g>
        <text class="pl" transform="translate(522 446) rotate(-90)">1</text><text class="pl" transform="translate(533 446) rotate(-90)">GND</text>
        <text class="pl" transform="translate(561 446) rotate(-90)">2</text><text class="n5" transform="translate(569 446) rotate(-90)">Net-(D1-A)</text>
        <text class="pl" transform="translate(606 393) rotate(-90)">2</text><text class="n5" transform="translate(614 393) rotate(-90)">Net-(D1-A)</text>
        <text class="pl" transform="translate(645 393) rotate(-90)">1</text><text class="n3" transform="translate(650 393) rotate(-90)">Net-(U1-GPIO4)</text>
        <text class="pl" transform="translate(584 550) rotate(-90)">1</text><text class="n4" transform="translate(591 550) rotate(-90)">Net-(U1-GPIO5)</text>
        <text class="pl" transform="translate(645 550) rotate(-90)">2</text><text class="pl" transform="translate(657 550) rotate(-90)">+3V3</text>
      </g>
    </svg>
  </div>

  <div class="sidebar d-flex flex-column align-items-center" role="toolbar" aria-label="Herramientas">
    <button class="btn tool is-on" title="Seleccionar"><svg><use href="#cursor"/></svg></button>
    <button class="btn tool" title="Conexiones locales"><svg><use href="#localr"/></svg></button><span class="hline"></span>
    <button class="btn tool" title="Añadir huella"><svg><use href="#fp"/></svg></button>
    <button class="btn tool more" title="Enrutar pista"><svg><use href="#track"/></svg></button>
    <button class="btn tool more" title="Ajustar longitud"><svg><use href="#tune"/></svg></button>
    <button class="btn tool" title="Añadir vía"><svg><use href="#via"/></svg></button>
    <button class="btn tool" title="Añadir zona"><svg><use href="#zone"/></svg></button>
    <button class="btn tool" title="Área de reglas"><svg><use href="#keep"/></svg></button><span class="hline"></span>
    <button class="btn tool" title="Línea"><svg><use href="#lin"/></svg></button>
    <button class="btn tool" title="Arco"><svg><use href="#arc"/></svg></button>
    <button class="btn tool" title="Rectángulo"><svg><use href="#rct"/></svg></button>
    <button class="btn tool" title="Círculo"><svg><use href="#cir"/></svg></button>
    <button class="btn tool" title="Polígono"><svg><use href="#poly"/></svg></button>
    <button class="btn tool" title="Bézier"><svg><use href="#bez"/></svg></button>
    <button class="btn tool" title="Imagen"><svg><use href="#img"/></svg></button>
    <button class="btn tool" title="Texto"><svg><use href="#tee"/></svg></button>
    <button class="btn tool" title="Caja de texto"><svg><use href="#tbox"/></svg></button>
    <button class="btn tool" title="Tabla"><svg><use href="#tbl"/></svg></button>
    <button class="btn tool more" title="Cota"><svg><use href="#dim"/></svg></button>
    <button class="btn tool" title="Eliminar"><svg><use href="#del"/></svg></button><span class="hline"></span>
    <button class="btn tool more" title="Origen"><svg><use href="#gorg"/></svg></button>
    <button class="btn tool" title="Medir"><svg><use href="#ruler"/></svg></button>
  </div>

  <aside class="panelcol d-flex flex-column">
    <div class="caphead">Apariencia</div>
    <div class="nav nav-tabs tabsrow d-flex align-items-end flex-nowrap" role="tablist">
      <button class="nav-link active" role="tab">Capas</button><button class="nav-link" role="tab">Objetos</button><button class="nav-link" role="tab">Redes</button>
    </div>
    <div class="tabpage d-flex flex-column flex-grow-1 overflow-hidden">
      <div class="layers flex-grow-1 overflow-hidden" id="layers"></div>
      <button class="fold d-flex align-items-center"><svg viewBox="0 0 4 8"><path d="M0 0l4 4-4 4z"/></svg>Opciones de visualización de capas</button>
    </div>
    <div class="field first"><label for="presets">Preajustes (Ctrl+Tab):</label><select id="presets" class="form-select pick"><option>---</option></select></div>
    <div class="field last"><label for="views">Vistas (Shift+Tab):</label><select id="views" class="form-select pick"><option>---</option></select></div>
    <div class="caphead split">Filtro de selección</div>
    <div class="filters d-flex">
      <div class="col-a" id="fa"></div>
      <div id="fb"></div>
    </div>
  </aside>
</main>

<footer>
  <div class="info d-flex">
    <div class="i1">Pads<br>24</div><div class="i2">Vías<br>0</div><div class="i3">Segmentos de pista<br>30</div><div class="i4">Redes<br>15</div><div>Sin enrutar<br>0</div>
  </div>
  <div class="statusbar d-flex">
    <div class="flex-grow-1">Se ha guardado el archivo 'C:\Users\jk.wongp\Documents\[UP]\[FABACADEMY]\Prueba 1\Prueba 1.kicad_pcb'.</div>
    <div class="s1">Z 5.84</div><div class="s2">X 151.7500&nbsp; Y 122.0000</div><div class="s3">dx 151.7500&nbsp; dy 122.0000&nbsp; dist 194.7102</div><div class="s4">cuadrícula 0.2500</div><div class="s5">mm</div><div class="s6">Seleccionar elemento(s)</div><div class="s7"></div>
  </div>
</footer>

<script src="https://cdn.jsdelivr.net/npm/bootstrap@5.3.0/dist/js/bootstrap.bundle.min.js"></script>
<script>
const layers = [['F.Cu','#c83434'],['B.Cu','#4d7fc4'],['F.Adhesive','#840084'],['B.Adhesive','#000084'],['F.Paste','#a39089'],['B.Paste','#00b0ac'],['F.Silkscreen','#f2eda1'],['B.Silkscreen','#e8b2a7'],['F.Mask','conic-gradient(#5a2a6a 25%,#6f3f7c 0 50%,#5a2a6a 0 75%,#6f3f7c 0) 0 0/8px 8px'],['B.Mask','conic-gradient(#0a6a60 25%,#1f8377 0 50%,#0a6a60 0 75%,#1f8377 0) 0 0/8px 8px'],['User.Drawings','#c2c2c2'],['User.Comments','#5994dc'],['User.Eco1','#b4dbd2'],['User.Eco2','#d8c852'],['Edge.Cuts','#d0d2cd'],['Margin','#ff26e2'],['F.Courtyard','#ff26e2'],['B.Courtyard','#26e9ff'],['F.Fab','#afafaf'],['B.Fab','#585d84'],['User.1','#c2c2c2'],['User.2','#5994dc'],['User.3','#b4dbd2'],['User.4','#d8c852']];
document.getElementById('layers').innerHTML = layers.map(([n, c], i) =>
  `<div class="lrow d-flex align-items-center${i ? '' : ' current'}"><span class="arrow">${i ? '' : '<svg viewBox="0 0 5 9"><path d="M0 0l5 4.500L0 9z" fill="#4a46e8"/></svg>'}</span><span class="sw" style="background:${c}"></span><button class="eye" aria-label="Mostrar ${n}"><svg><use href="#eye"/></svg></button><span>${n}</span></div>`).join('');
const boxes = (id, names) => document.getElementById(id).innerHTML = names.map((n, i) =>
  `<div class="form-check cbx"><input class="form-check-input" type="checkbox" id="${id + i}"${n === 'Elementos bloqueados' ? '' : ' checked'}><label for="${id + i}">${n}</label></div>`).join('');
boxes('fa', ['Todos los elementos','Huellas','Pistas','Pads','Zonas','Dimensiones']);
boxes('fb', ['Elementos bloqueados','Texto','Vías','Gráficos','Áreas de Reglas','Otros elementos']);

// Grid marks: every tenth column and row is drawn longer
let d = '';
for (let i = 0; i < 29; i++) for (let j = 0; j < 16; j++) {
  const x = Math.floor(82.4 + i * 52.3), y = Math.floor(152.6 + j * 52.35), mx = i % 10 === 2, my = j === 7;
  d += `<rect x="${mx ? x - 1 : x}" y="${my ? y - 1 : y}" width="${mx ? 3 : 1}" height="${my ? 3 : 1}"/>`;
}
document.getElementById('dots').innerHTML = d;

// Pads of U1: 7..1 down the left side, 8..14 down the right
const nets = {7:'Net-(U1-GPIO5)',6:'Net-(U1-GPIO4)',3:'+3V3',2:'GND'};
const pad = (n, cx, cy) => {
  const net = nets[n] || `unconnected-(U1-GPIO${n}-Pad${n})`, cls = net.length < 5 ? 'pl' : net.length < 15 ? 'n5' : net.length > 23 ? 'n3' : 'n3';
  return `<rect x="${cx - 21}" y="${cy - 13}" width="42" height="25" fill="#c83434"/><rect x="${cx - 28.5}" y="${cy - 21.5}" width="58" height="42" rx="8" fill="none" stroke="#b5353c"/><text class="pn" x="${cx}" y="${cy - 2}">${n}</text><text class="${cls}" x="${cx}" y="${cy + (cls === 'pl' ? 11 : cls === 'n5' ? 6 : 4)}">${net}</text>`;
};
let p = '';
for (let k = 0; k < 7; k++) { const cy = Math.round(339.4 + k * 53.1); p += pad(7 - k, 712, cy) + pad(8 + k, 1084, cy); }
document.getElementById('pads').innerHTML = p;
</script>
</body>
</html>
